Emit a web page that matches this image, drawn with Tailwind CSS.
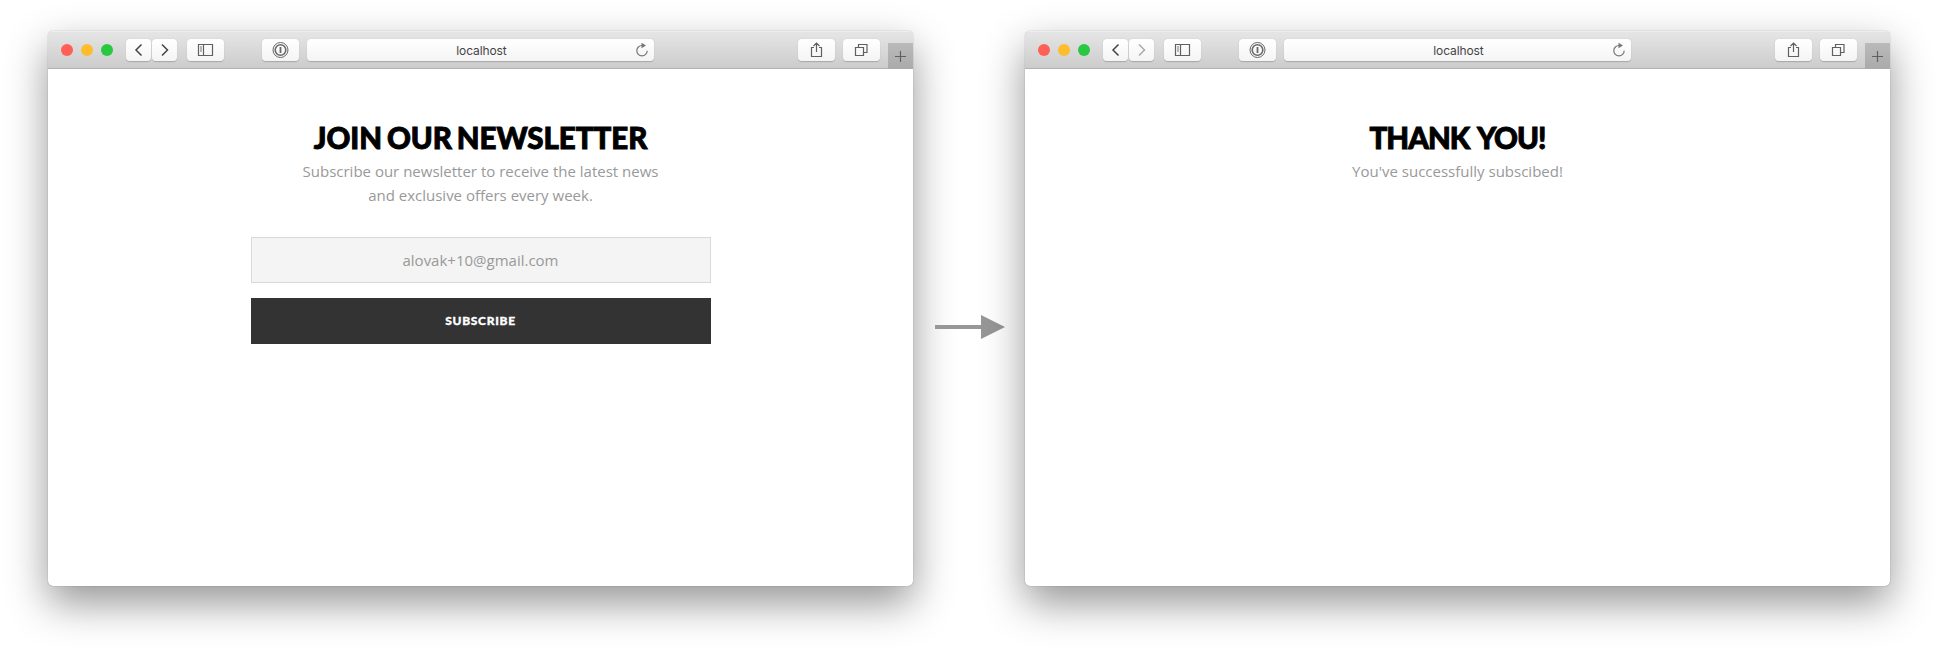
<!DOCTYPE html>
<html lang="en">
<head>
<meta charset="utf-8">
<title>Newsletter flow</title>
<script src="https://cdn.jsdelivr.net/npm/@tailwindcss/browser@4"></script>
</head>
<body class="bg-white">
<svg class="hidden">
  <symbol id="back" viewBox="0 0 25 22"><path d="M15.500 5.500 10 11l5.500 5.500" fill="none" stroke="currentColor" stroke-width="1.500"/></symbol>
  <symbol id="forward" viewBox="0 0 25 22"><path d="M10 5.500 15.500 11 10 16.500" fill="none" stroke="currentColor" stroke-width="1.500"/></symbol>
  <symbol id="sidebar" viewBox="0 0 37 22"><path d="M11.500 5.500h14v11h-14zM16.500 5.500v11" fill="none" stroke="#606060" stroke-width="1.200"/><path d="M13 8h2M13 10h2M13 12h2" stroke="#777" stroke-width="1"/></symbol>
  <symbol id="password" viewBox="0 0 37 22"><g fill="none" stroke="#686868"><circle cx="18.500" cy="11" r="7.500" stroke-width="1"/><circle cx="18.500" cy="11" r="5.300" stroke-width="1.600"/><path d="M18.500 8v6" stroke-width="1.800"/></g></symbol>
  <symbol id="reload" viewBox="0 0 14 16"><path d="M7 3.500A5.200 5.200 0 1 0 12.200 8.800" fill="none" stroke="#777" stroke-width="1.200"/><path d="M6.500.700 11 3.500 6.500 6.300z" fill="#777"/></symbol>
  <symbol id="share" viewBox="0 0 37 22"><path d="M16 8.500h-2.500v9h10v-9H21M18.500 13V4M15.500 7l3-3 3 3" fill="none" stroke="#606060" stroke-width="1.200"/></symbol>
  <symbol id="tabs" viewBox="0 0 37 22"><path d="M12.500 8.500h8v8h-8zM15.500 8V5.500h8.500v8h-3" fill="none" stroke="#606060" stroke-width="1.200"/></symbol>
</svg>

<main class="flex h-[653px] w-[1938px] items-start overflow-hidden pl-12 pt-[31px]">
  <section class="h-[555px] w-[865px] shrink-0 overflow-hidden rounded-[5px] bg-white shadow-[0_0_1px_rgba(0,0,0,0.5),0_17px_42px_rgba(0,0,0,0.42)]">
    <header class="flex h-[38px] items-start border-b border-[#b2b2b2] bg-linear-to-b from-[#e6e6e6] to-[#cccccc] pl-[13px] shadow-[inset_0_1px_0_#eeeeee]">
      <div class="mt-[13px] flex gap-2"><i class="size-3 rounded-full bg-[#ff5f57]"></i><i class="size-3 rounded-full bg-[#ffbd2e]"></i><i class="size-3 rounded-full bg-[#28c940]"></i></div>
      <div class="ml-[13px] mt-2 flex gap-px">
        <div class="h-[22px] w-[25px] rounded bg-linear-to-b from-white to-[#f4f4f4] text-[#444] shadow-[0_0.5px_1px_rgba(0,0,0,0.2)]"><svg class="size-full"><use href="#back"/></svg></div>
        <div class="h-[22px] w-[25px] rounded bg-linear-to-b from-white to-[#f4f4f4] text-[#444] shadow-[0_0.5px_1px_rgba(0,0,0,0.2)]"><svg class="size-full"><use href="#forward"/></svg></div>
      </div>
      <div class="ml-2.5 mt-2 h-[22px] w-[37px] rounded bg-linear-to-b from-white to-[#f4f4f4] shadow-[0_0.5px_1px_rgba(0,0,0,0.2)]"><svg class="size-full"><use href="#sidebar"/></svg></div>
      <div class="ml-[38px] mt-2 h-[22px] w-[37px] rounded bg-linear-to-b from-white to-[#f4f4f4] shadow-[0_0.5px_1px_rgba(0,0,0,0.2)]"><svg class="size-full"><use href="#password"/></svg></div>
      <div class="ml-2 mt-2 flex h-[22px] w-[347px] items-center rounded bg-linear-to-b from-white to-[#f4f4f4] pl-[21px] pr-[5px] shadow-[0_0.5px_1px_rgba(0,0,0,0.2)]"><span class="grow pt-px text-center font-[Inter,sans-serif] text-[12px] leading-[22px] tracking-[-0.1px] text-[#444]">localhost</span><svg class="h-4 w-3.5"><use href="#reload"/></svg></div>
      <div class="ml-36 mt-2 h-[22px] w-[37px] rounded bg-linear-to-b from-white to-[#f4f4f4] shadow-[0_0.5px_1px_rgba(0,0,0,0.2)]"><svg class="size-full"><use href="#share"/></svg></div>
      <div class="ml-2 mt-2 h-[22px] w-[37px] rounded bg-linear-to-b from-white to-[#f4f4f4] shadow-[0_0.5px_1px_rgba(0,0,0,0.2)]"><svg class="size-full"><use href="#tabs"/></svg></div>
      <div class="ml-2 mt-3 h-[26px] w-[25px] bg-linear-to-b from-[#bababa] to-[#aaaaaa]"><svg class="size-full" viewBox="0 0 25 26"><path d="M7 13.500h11M12.500 8v11" stroke="#606060" stroke-width="1.200"/></svg></div>
    </header>
    <div class="flex flex-col items-center pt-[51px]">
      <h1 class="whitespace-nowrap font-[Lato,sans-serif] text-[29.5px] font-black leading-[36px] tracking-[-0.05px] text-black [-webkit-text-stroke:0.9px_black] [word-spacing:-2px]">JOIN OUR NEWSLETTER</h1>
      <p class="whitespace-nowrap pt-[3px] text-center font-['Open_Sans',sans-serif] text-[15px] leading-6 text-[#999]">Subscribe our newsletter to receive the latest news<br>and exclusive offers every week.</p>
      <div class="mt-[30px] h-[46px] w-[460px] border border-[#d9d9d9] bg-[#f4f4f4] text-center font-['Open_Sans',sans-serif] text-[15px] leading-[45px] text-[#999]">alovak+10@gmail.com</div>
      <div class="mt-[15px] h-[46px] w-[460px] bg-[#333] text-center font-[Lato,sans-serif] text-[12px] font-black leading-[45px] tracking-[0.7px] text-white [-webkit-text-stroke:0.3px_white]">SUBSCRIBE</div>
    </div>
  </section>

  <svg class="ml-[22px] mt-[284px] h-6 w-[70px] shrink-0" viewBox="0 0 70 24"><path d="M0 10h46V0l24 12-24 12V14H0z" fill="#979797"/></svg>

  <section class="ml-5 h-[555px] w-[865px] shrink-0 overflow-hidden rounded-[5px] bg-white shadow-[0_0_1px_rgba(0,0,0,0.5),0_17px_42px_rgba(0,0,0,0.42)]">
    <header class="flex h-[38px] items-start border-b border-[#b2b2b2] bg-linear-to-b from-[#e6e6e6] to-[#cccccc] pl-[13px] shadow-[inset_0_1px_0_#eeeeee]">
      <div class="mt-[13px] flex gap-2"><i class="size-3 rounded-full bg-[#ff5f57]"></i><i class="size-3 rounded-full bg-[#ffbd2e]"></i><i class="size-3 rounded-full bg-[#28c940]"></i></div>
      <div class="ml-[13px] mt-2 flex gap-px">
        <div class="h-[22px] w-[25px] rounded bg-linear-to-b from-white to-[#f4f4f4] text-[#444] shadow-[0_0.5px_1px_rgba(0,0,0,0.2)]"><svg class="size-full"><use href="#back"/></svg></div>
        <div class="h-[22px] w-[25px] rounded bg-linear-to-b from-white to-[#f4f4f4] text-[#aaa] shadow-[0_0.5px_1px_rgba(0,0,0,0.2)]"><svg class="size-full"><use href="#forward"/></svg></div>
      </div>
      <div class="ml-2.5 mt-2 h-[22px] w-[37px] rounded bg-linear-to-b from-white to-[#f4f4f4] shadow-[0_0.5px_1px_rgba(0,0,0,0.2)]"><svg class="size-full"><use href="#sidebar"/></svg></div>
      <div class="ml-[38px] mt-2 h-[22px] w-[37px] rounded bg-linear-to-b from-white to-[#f4f4f4] shadow-[0_0.5px_1px_rgba(0,0,0,0.2)]"><svg class="size-full"><use href="#password"/></svg></div>
      <div class="ml-2 mt-2 flex h-[22px] w-[347px] items-center rounded bg-linear-to-b from-white to-[#f4f4f4] pl-[21px] pr-[5px] shadow-[0_0.5px_1px_rgba(0,0,0,0.2)]"><span class="grow pt-px text-center font-[Inter,sans-serif] text-[12px] leading-[22px] tracking-[-0.1px] text-[#444]">localhost</span><svg class="h-4 w-3.5"><use href="#reload"/></svg></div>
      <div class="ml-36 mt-2 h-[22px] w-[37px] rounded bg-linear-to-b from-white to-[#f4f4f4] shadow-[0_0.5px_1px_rgba(0,0,0,0.2)]"><svg class="size-full"><use href="#share"/></svg></div>
      <div class="ml-2 mt-2 h-[22px] w-[37px] rounded bg-linear-to-b from-white to-[#f4f4f4] shadow-[0_0.5px_1px_rgba(0,0,0,0.2)]"><svg class="size-full"><use href="#tabs"/></svg></div>
      <div class="ml-2 mt-3 h-[26px] w-[25px] bg-linear-to-b from-[#bababa] to-[#aaaaaa]"><svg class="size-full" viewBox="0 0 25 26"><path d="M7 13.500h11M12.500 8v11" stroke="#606060" stroke-width="1.200"/></svg></div>
    </header>
    <div class="flex flex-col items-center pt-[51px]">
      <h1 class="whitespace-nowrap font-[Lato,sans-serif] text-[29.5px] font-black leading-[36px] tracking-[-1px] text-black [-webkit-text-stroke:0.9px_black] [word-spacing:3px]">THANK YOU!</h1>
      <p class="whitespace-nowrap pt-[3px] text-center font-['Open_Sans',sans-serif] text-[15px] leading-6 text-[#999]">You've successfully subscibed!</p>
    </div>
  </section>
</main>
</body>
</html>
